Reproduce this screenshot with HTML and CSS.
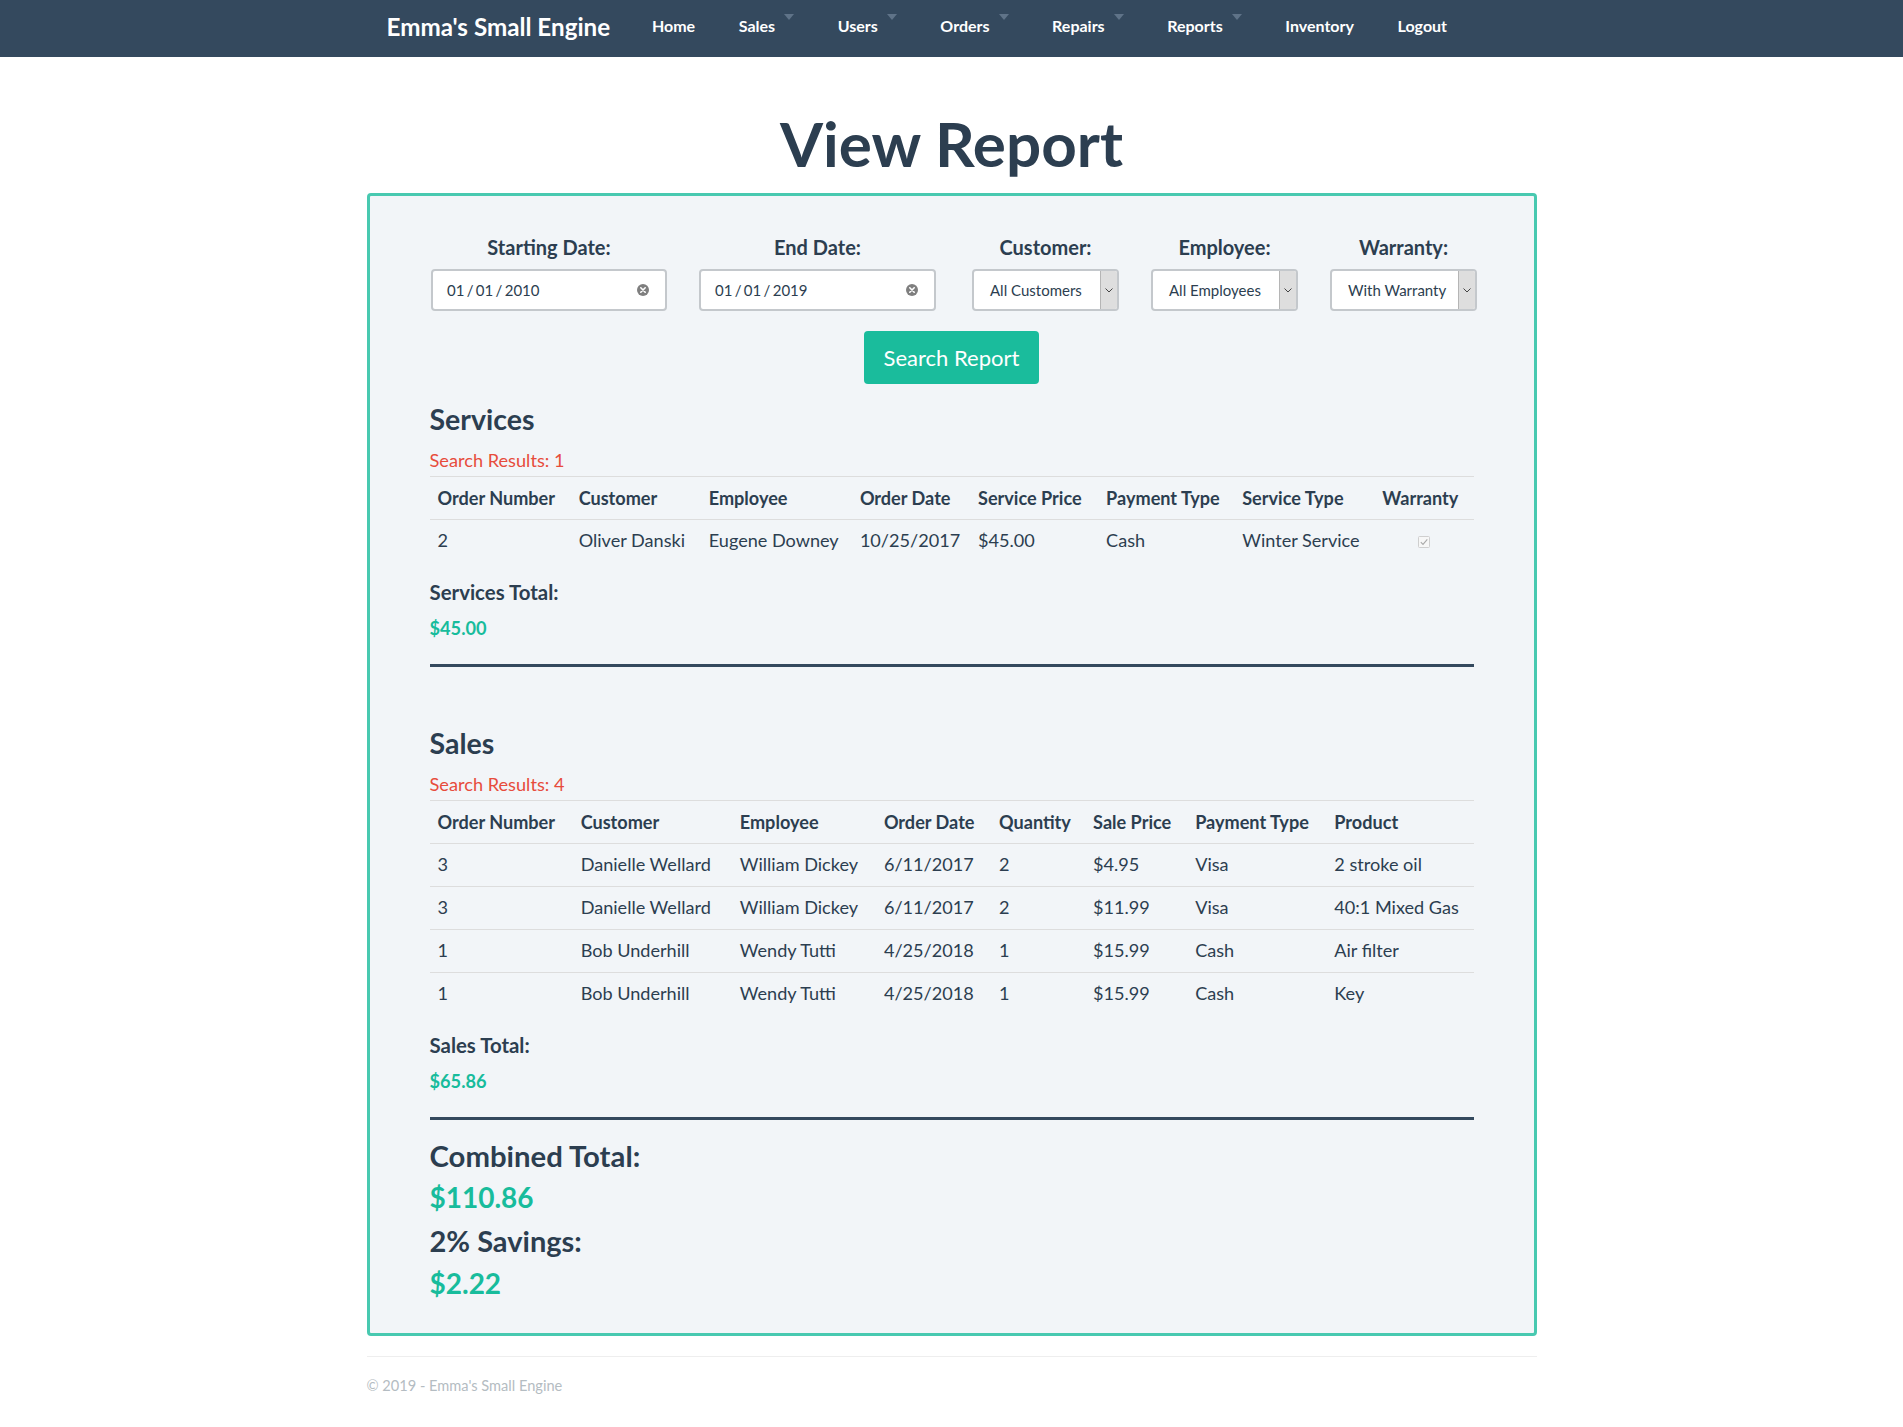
FILE: index.html
```html
<!DOCTYPE html>
<html lang="en">
<head>
<meta charset="utf-8">
<title>View Report - Emma's Small Engine</title>
<link rel="stylesheet" href="styles.css">
</head>
<body>
<nav class="navbar">
  <div class="nav-inner">
    <a class="brand" href="#">Emma's Small Engine</a>
    <ul class="nav-links">
      <li><a class="nav-link" href="#">Home</a></li>
      <li><a class="nav-link" href="#">Sales<span class="caret"></span></a></li>
      <li><a class="nav-link" href="#">Users<span class="caret"></span></a></li>
      <li><a class="nav-link" href="#">Orders<span class="caret"></span></a></li>
      <li><a class="nav-link" href="#">Repairs<span class="caret"></span></a></li>
      <li><a class="nav-link" href="#">Reports<span class="caret"></span></a></li>
      <li><a class="nav-link" href="#">Inventory</a></li>
      <li><a class="nav-link" href="#">Logout</a></li>
    </ul>
  </div>
</nav>

<main class="page">
  <h1 class="page-title">View Report</h1>

  <section class="report-box">
    <form class="filters">
      <div class="field">
        <label class="field-label">Starting Date:</label>
        <div class="date-input">
          <span class="date-value">01 / 01 / 2010</span>
          <svg class="clear-icon" width="12" height="12" viewBox="0 0 12 12"><circle cx="6" cy="6" r="6" fill="#7f7f7f"/><path d="M3.8 3.8 L8.2 8.2 M8.2 3.8 L3.8 8.2" stroke="#fff" stroke-width="1.6" stroke-linecap="round"/></svg>
        </div>
      </div>
      <div class="field">
        <label class="field-label">End Date:</label>
        <div class="date-input date-input-end">
          <span class="date-value">01 / 01 / 2019</span>
          <svg class="clear-icon" width="12" height="12" viewBox="0 0 12 12"><circle cx="6" cy="6" r="6" fill="#7f7f7f"/><path d="M3.8 3.8 L8.2 8.2 M8.2 3.8 L3.8 8.2" stroke="#fff" stroke-width="1.6" stroke-linecap="round"/></svg>
        </div>
      </div>
      <div class="field field-wide-gap">
        <label class="field-label">Customer:</label>
        <div class="select-box">
          <span class="select-value">All Customers</span>
          <span class="select-arrow"><svg width="8" height="5" viewBox="0 0 8 5"><path d="M0.5 0.5 L4 4 L7.5 0.5" fill="none" stroke="#444" stroke-width="1"/></svg></span>
        </div>
      </div>
      <div class="field">
        <label class="field-label">Employee:</label>
        <div class="select-box">
          <span class="select-value">All Employees</span>
          <span class="select-arrow"><svg width="8" height="5" viewBox="0 0 8 5"><path d="M0.5 0.5 L4 4 L7.5 0.5" fill="none" stroke="#444" stroke-width="1"/></svg></span>
        </div>
      </div>
      <div class="field">
        <label class="field-label">Warranty:</label>
        <div class="select-box">
          <span class="select-value">With Warranty</span>
          <span class="select-arrow"><svg width="8" height="5" viewBox="0 0 8 5"><path d="M0.5 0.5 L4 4 L7.5 0.5" fill="none" stroke="#444" stroke-width="1"/></svg></span>
        </div>
      </div>
    </form>

    <div class="actions">
      <button class="btn-search" type="button">Search Report</button>
    </div>

    <h2 class="section-title">Services</h2>
    <p class="results">Search Results: 1</p>
    <table class="report-table">
      <colgroup>
        <col class="sv1"><col class="sv2"><col class="sv3"><col class="sv4"><col class="sv5"><col class="sv6"><col class="sv7"><col class="sv8">
      </colgroup>
      <thead>
        <tr><th>Order Number</th><th>Customer</th><th>Employee</th><th>Order Date</th><th>Service Price</th><th>Payment Type</th><th>Service Type</th><th>Warranty</th></tr>
      </thead>
      <tbody>
        <tr><td>2</td><td>Oliver Danski</td><td>Eugene Downey</td><td>10/25/2017</td><td>$45.00</td><td>Cash</td><td>Winter Service</td><td class="cell-center"><svg class="check" width="12" height="12" viewBox="0 0 12 12"><rect x="0.5" y="0.5" width="11" height="11" rx="1" fill="#f7f7f7" stroke="#cfcfcf"/><path d="M2.8 6.2 L5 8.4 L9.3 3.4" fill="none" stroke="#a9a9a9" stroke-width="1.1"/></svg></td></tr>
      </tbody>
    </table>
    <p class="total-label">Services Total:</p>
    <p class="total-value">$45.00</p>
    <hr class="divider">

    <h2 class="section-title section-sales">Sales</h2>
    <p class="results">Search Results: 4</p>
    <table class="report-table">
      <colgroup>
        <col class="sl1"><col class="sl2"><col class="sl3"><col class="sl4"><col class="sl5"><col class="sl6"><col class="sl7"><col class="sl8">
      </colgroup>
      <thead>
        <tr><th>Order Number</th><th>Customer</th><th>Employee</th><th>Order Date</th><th>Quantity</th><th>Sale Price</th><th>Payment Type</th><th>Product</th></tr>
      </thead>
      <tbody>
        <tr><td>3</td><td>Danielle Wellard</td><td>William Dickey</td><td>6/11/2017</td><td>2</td><td>$4.95</td><td>Visa</td><td>2 stroke oil</td></tr>
        <tr><td>3</td><td>Danielle Wellard</td><td>William Dickey</td><td>6/11/2017</td><td>2</td><td>$11.99</td><td>Visa</td><td>40:1 Mixed Gas</td></tr>
        <tr><td>1</td><td>Bob Underhill</td><td>Wendy Tutti</td><td>4/25/2018</td><td>1</td><td>$15.99</td><td>Cash</td><td>Air filter</td></tr>
        <tr><td>1</td><td>Bob Underhill</td><td>Wendy Tutti</td><td>4/25/2018</td><td>1</td><td>$15.99</td><td>Cash</td><td>Key</td></tr>
      </tbody>
    </table>
    <p class="total-label">Sales Total:</p>
    <p class="total-value">$65.86</p>
    <hr class="divider">

    <p class="grand-label">Combined Total:</p>
    <p class="grand-value">$110.86</p>
    <p class="grand-label grand-label-2">2% Savings:</p>
    <p class="grand-value">$2.22</p>
  </section>

  <footer class="footer">
    <p class="footer-text">© 2019 - Emma's Small Engine</p>
  </footer>
</main>
</body>
</html>
```

FILE: styles.css
```css
html, body {
  margin: 0;
  padding: 0;
}
body {
  font-family: Lato, "Open Sans", "Liberation Sans", sans-serif;
  color: #2c3e50;
  line-height: 1.2;
  background: #ffffff;
}

/* Navbar */
.navbar {
  background: #34495e;
  height: 57px;
}
.nav-inner {
  width: 1170px;
  margin: 0 auto;
  height: 57px;
  display: flex;
  align-items: center;
}
.brand {
  color: #ffffff;
  font-weight: 700;
  font-size: 24.2px;
  margin-left: 20px;
  padding-bottom: 4px;
  text-decoration: none;
}
.nav-links {
  list-style: none;
  margin: 0 0 0 20px;
  padding: 0;
  display: flex;
  height: 57px;
}
.nav-link {
  display: flex;
  align-items: center;
  height: 57px;
  box-sizing: border-box;
  padding: 0 21.8px 5px;
  color: #ffffff;
  font-weight: 700;
  font-size: 16px;
  text-decoration: none;
}
.caret {
  align-self: flex-start;
  margin-top: 14px;
  margin-left: 9px;
  width: 0;
  height: 0;
  border-left: 5.5px solid transparent;
  border-right: 5.5px solid transparent;
  border-top: 6px solid #5f7388;
}

/* Page */
.page {
  width: 1170px;
  margin: 0 auto;
}
.page-title {
  margin: 49px 0 13px;
  font-size: 62px;
  font-weight: 700;
  line-height: 1.2;
  text-align: center;
  color: #2c3e50;
}

.report-box {
  border: 3px solid #48c9b0;
  border-radius: 4px;
  background: #f2f5f8;
  padding: 39px 60px 32.2px;
}

/* Filters */
.filters {
  display: flex;
  gap: 32px;
  padding-left: 1.5px;
  margin: 0;
}
.field {
  display: flex;
  flex-direction: column;
  align-items: center;
}
.field-wide-gap {
  margin-left: 4px;
}
.field-label {
  font-size: 20px;
  font-weight: 700;
  line-height: 24px;
  margin-bottom: 10px;
}
.date-input {
  width: 236px;
  height: 42px;
  box-sizing: border-box;
  border: 2px solid #c4c8cc;
  border-radius: 4px;
  background: #ffffff;
  display: flex;
  align-items: center;
  justify-content: space-between;
  padding: 0 16px 0 14px;
}
.date-input-end {
  width: 237px;
}
.date-value {
  font-size: 15px;
  word-spacing: -1.5px;
  color: #2c3e50;
  margin-bottom: 1.5px;
}
.clear-icon {
  display: block;
}
.select-box {
  width: 147px;
  height: 42px;
  box-sizing: border-box;
  border: 2px solid #c4c8cc;
  border-radius: 4px;
  background: #ffffff;
  display: flex;
  align-items: stretch;
  overflow: hidden;
}
.select-value {
  flex: 1;
  display: flex;
  align-items: center;
  padding-left: 16px;
  padding-bottom: 1.5px;
  font-size: 15px;
  color: #2c3e50;
}
.select-arrow {
  width: 16px;
  background: #dedede;
  border-left: 1px solid #b5b5b5;
  display: flex;
  align-items: center;
  justify-content: center;
}

.actions {
  display: flex;
  justify-content: center;
  margin-top: 20px;
}
.btn-search {
  height: 53px;
  padding: 0 20px;
  border: none;
  border-radius: 4px;
  background: #1abc9c;
  color: #ffffff;
  font-family: inherit;
  font-size: 22px;
}

/* Sections */
.section-title {
  margin: 16.3px 0 0;
  font-size: 28.5px;
  font-weight: 700;
  line-height: 36px;
}
.section-sales {
  margin-top: 58px;
}
.results {
  margin: 13px 0 0;
  font-size: 18.2px;
  line-height: 20.4px;
  color: #e74c3c;
}

.report-table {
  width: 100%;
  margin-top: 5.6px;
  border-collapse: collapse;
  table-layout: fixed;
  font-size: 18.1px;
}
.report-table th,
.report-table td {
  text-align: left;
  padding: 9px 8px;
  line-height: 24px;
  border-top: 1px solid #dddddd;
  white-space: nowrap;
}
.report-table th {
  font-weight: 700;
}
.report-table td {
  font-weight: 400;
  padding-top: 8.4px;
  padding-bottom: 9.6px;
}
.report-table .cell-center {
  text-align: center;
}
.check {
  vertical-align: -1px;
}

.sv1 { width: 141px; }
.sv2 { width: 130px; }
.sv3 { width: 151px; }
.sv4 { width: 118px; }
.sv5 { width: 128px; }
.sv6 { width: 136px; }
.sv7 { width: 140px; }
.sv8 { width: 99px; }

.sl1 { width: 143px; }
.sl2 { width: 159px; }
.sl3 { width: 144px; }
.sl4 { width: 115px; }
.sl5 { width: 94px; }
.sl6 { width: 102px; }
.sl7 { width: 139px; }
.sl8 { width: 147px; }

.total-label {
  margin: 20.4px 0 0;
  font-size: 20.4px;
  font-weight: 700;
  line-height: 21.6px;
}
.total-value {
  margin: 14.2px 0 0;
  font-size: 18.2px;
  font-weight: 700;
  line-height: 20.4px;
  color: #18bc9c;
}
.divider {
  margin: 25.6px 0 0;
  border: none;
  height: 3px;
  background: #34495e;
}

.grand-label {
  margin: 18.8px 0 0;
  font-size: 29.3px;
  font-weight: 700;
  line-height: 33.6px;
}
.grand-label-2 {
  margin-top: 8.8px;
  font-size: 29px;
}
.grand-value {
  margin: 7.1px 0 0;
  font-size: 28px;
  font-weight: 700;
  line-height: 36px;
  color: #18bc9c;
}

/* Footer */
.footer {
  margin-top: 19.6px;
  border-top: 1px solid #eeeeee;
}
.footer-text {
  margin: 20.4px 0 0;
  font-size: 14.6px;
  color: #b4bcc2;
}
```
